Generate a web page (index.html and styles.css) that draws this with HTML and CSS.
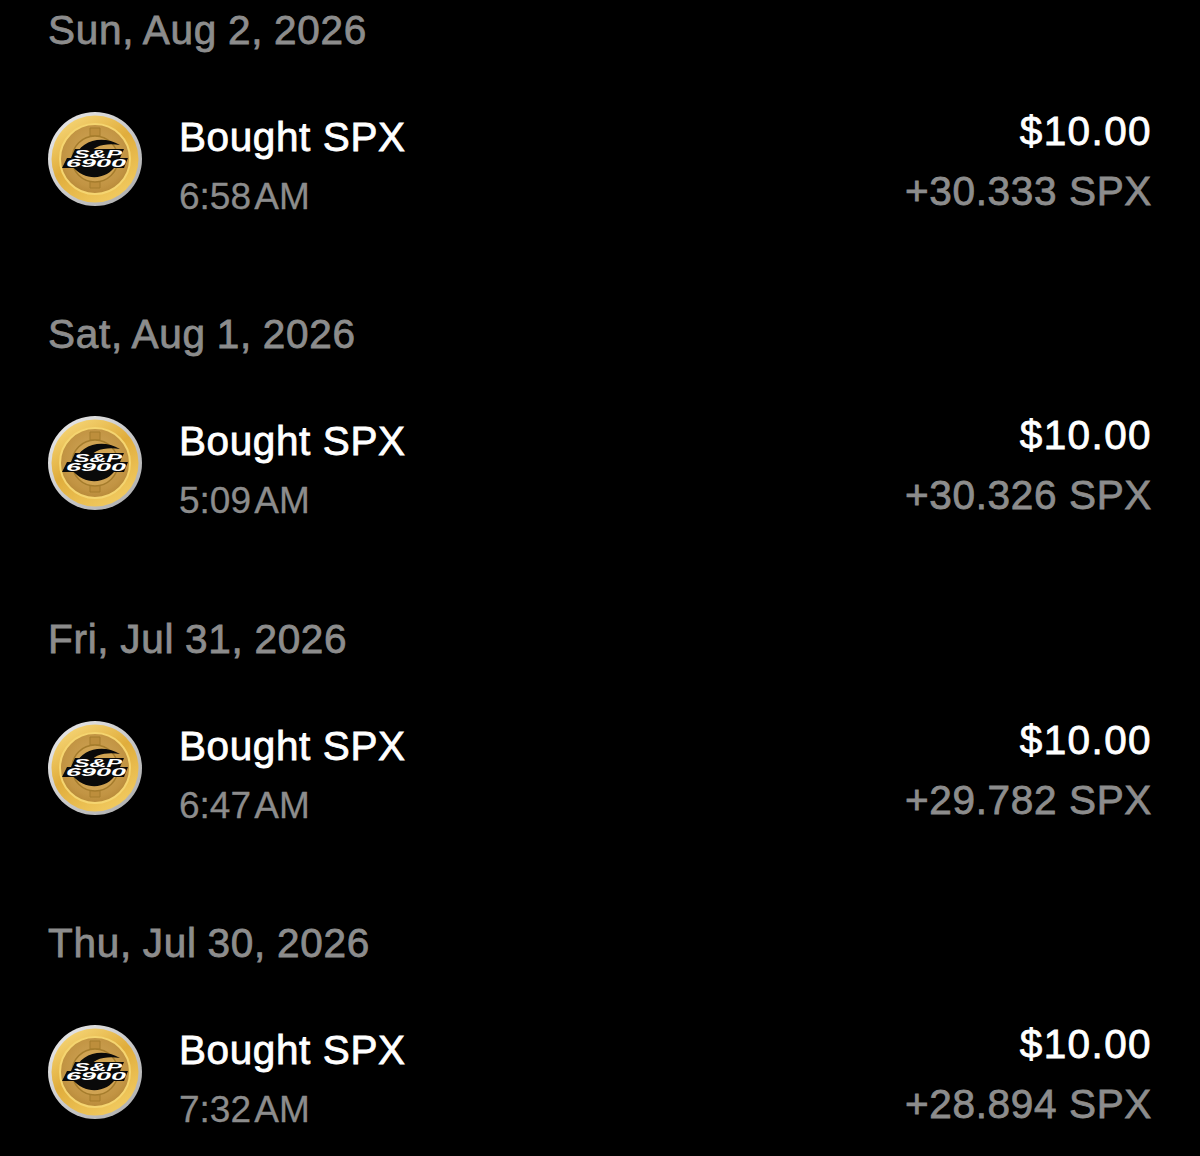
FILE: index.html
```html
<!DOCTYPE html>
<html lang="en">
<head>
<meta charset="utf-8">
<title>Transactions</title>
<link rel="stylesheet" href="styles.css">
</head>
<body>
<svg class="defs" width="0" height="0" aria-hidden="true">
  <defs>
    <radialGradient id="face" cx="0.5" cy="0.45" r="0.6">
      <stop offset="0" stop-color="#d2a95c"/>
      <stop offset="0.75" stop-color="#c29443"/>
      <stop offset="1" stop-color="#b38535"/>
    </radialGradient>
    <linearGradient id="rim" x1="0.2" y1="0" x2="0.8" y2="1">
      <stop offset="0" stop-color="#f6d677"/>
      <stop offset="0.45" stop-color="#e0ad3c"/>
      <stop offset="1" stop-color="#f3cd63"/>
    </linearGradient>
    <linearGradient id="edge" x1="0" y1="0" x2="1" y2="1">
      <stop offset="0" stop-color="#ececec"/>
      <stop offset="1" stop-color="#a9a9a9"/>
    </linearGradient>
    <symbol id="coin" viewBox="0 0 94 94">
      <circle cx="47" cy="47" r="47" fill="url(#edge)"/>
      <circle cx="47" cy="47" r="43.5" fill="url(#rim)"/>
      <circle cx="47" cy="47" r="35" fill="url(#face)" stroke="#f5d570" stroke-width="2"/>
      <path d="M42 16h10v8h-10zM42 66h10v10h-10z" fill="#bd8e3c" stroke="#a57c2c" stroke-width="1"/>
      <circle cx="47" cy="47" r="23" fill="#d0a352" stroke="#a57c2c" stroke-width="1.5"/>
      <path d="M27 46C31 29 54 22 72 33 58 31 44 33 39 46Z" fill="#0a0a0a"/>
      <path d="M24 54C36 57 56 56 68 53 60 67 38 71 24 54Z" fill="#0a0a0a"/>
      <path d="M27 37H76L72 46H80L76 56H14L19 46H23Z" fill="#0a0a0a"/>
      <text class="coin-text" x="26" y="45.5" textLength="48" lengthAdjust="spacingAndGlyphs">S&amp;P</text>
      <text class="coin-text" x="18" y="54.5" textLength="60" lengthAdjust="spacingAndGlyphs">6900</text>
    </symbol>
  </defs>
</svg>
<main class="feed">
  <section class="day">
    <h2 class="date">Sun, Aug 2, 2026</h2>
    <div class="tx">
      <svg class="coin" viewBox="0 0 94 94"><use href="#coin"/></svg>
      <div class="main"><div class="title">Bought SPX</div><div class="sub">6:58 AM</div></div>
      <div class="amounts"><div class="usd">$10.00</div><div class="qty">+30.333 SPX</div></div>
    </div>
  </section>
  <section class="day">
    <h2 class="date">Sat, Aug 1, 2026</h2>
    <div class="tx">
      <svg class="coin" viewBox="0 0 94 94"><use href="#coin"/></svg>
      <div class="main"><div class="title">Bought SPX</div><div class="sub">5:09 AM</div></div>
      <div class="amounts"><div class="usd">$10.00</div><div class="qty">+30.326 SPX</div></div>
    </div>
  </section>
  <section class="day">
    <h2 class="date">Fri, Jul 31, 2026</h2>
    <div class="tx">
      <svg class="coin" viewBox="0 0 94 94"><use href="#coin"/></svg>
      <div class="main"><div class="title">Bought SPX</div><div class="sub">6:47 AM</div></div>
      <div class="amounts"><div class="usd">$10.00</div><div class="qty">+29.782 SPX</div></div>
    </div>
  </section>
  <section class="day">
    <h2 class="date">Thu, Jul 30, 2026</h2>
    <div class="tx">
      <svg class="coin" viewBox="0 0 94 94"><use href="#coin"/></svg>
      <div class="main"><div class="title">Bought SPX</div><div class="sub">7:32 AM</div></div>
      <div class="amounts"><div class="usd">$10.00</div><div class="qty">+28.894 SPX</div></div>
    </div>
  </section>
</main>
</body>
</html>
```
FILE: styles.css
```css
* { box-sizing: border-box; }
html, body { margin: 0; height: 100%; background: #000; overflow: hidden; }
body { font-family: "Liberation Sans", Arial, sans-serif; color: #fff; }
.defs { position: absolute; }
.feed { height: 1156px; overflow: hidden; padding: 6px 48px 0 48px; }
.day { height: 304.3px; }
.date { margin: 0; font-size: 40.5px; line-height: 48px; font-weight: 400; color: #8c8c8c; letter-spacing: 0.7px; word-spacing: -1px; -webkit-text-stroke: 0.8px #8c8c8c; }
.tx { display: flex; align-items: flex-start; margin-top: 58px; }
.coin { width: 94px; height: 94px; flex: none; }
.main { margin-left: 37px; flex: 1; }
.title { font-size: 40.5px; line-height: 48px; margin-top: 1px; letter-spacing: 0.6px; -webkit-text-stroke: 0.8px #fff; }
.sub { font-size: 37px; line-height: 48px; color: #8c8c8c; margin-top: 12px; word-spacing: -5px; -webkit-text-stroke: 0.3px #8c8c8c; }
.amounts { text-align: right; margin-top: -5px; }
.usd { font-size: 40.5px; line-height: 48px; letter-spacing: 1.4px; -webkit-text-stroke: 0.8px #fff; }
.qty { font-size: 40.5px; line-height: 48px; color: #8c8c8c; margin-top: 12px; letter-spacing: 0.65px; -webkit-text-stroke: 0.8px #8c8c8c; }
.coin-text { font-family: "Liberation Sans", sans-serif; font-weight: 700; font-style: italic; font-size: 10px; fill: #fff; }
```
